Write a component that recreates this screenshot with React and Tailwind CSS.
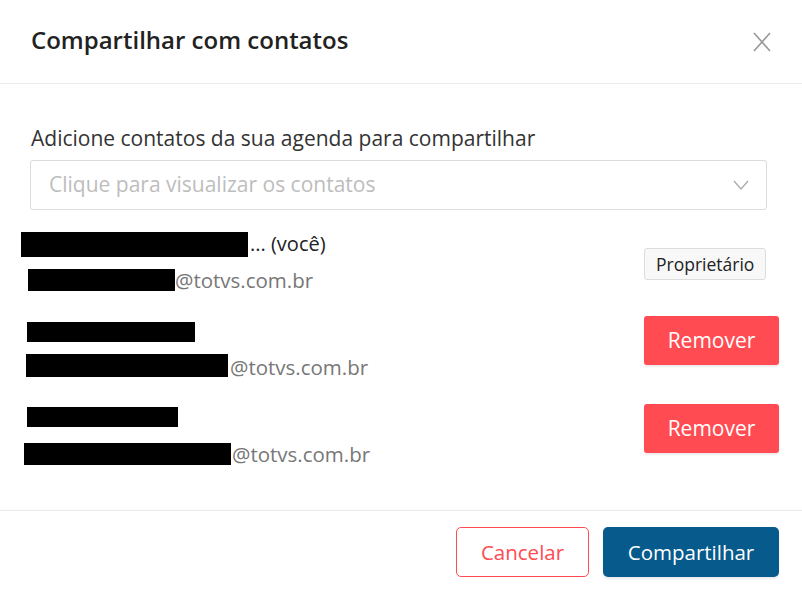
import React from 'react';

const font = { fontFamily: '"Open Sans", "Noto Sans", sans-serif' };

function Redacted({ className }) {
  return <div className={`bg-black shrink-0 ${className}`} />;
}

function RemoveButton() {
  return (
    <button className="w-[135px] h-[49px] rounded-[3px] bg-[#ff4b51] text-white text-[21px] shadow-[0_2px_2px_rgba(0,0,0,0.08)]">
      Remover
    </button>
  );
}

export default function App() {
  return (
    <div className="w-[802px] h-[592px] bg-white flex flex-col text-[#333]" style={font}>
      {/* Header */}
      <div className="h-[84px] shrink-0 flex items-center justify-between pl-[31px] pr-[30px] border-b border-[#ebebeb]">
        <h2 className="text-[24px] font-semibold text-[#222] pb-[4px]">Compartilhar com contatos</h2>
        <svg width="20" height="20" viewBox="0 0 20 20" className="text-[#999]">
          <path d="M2 1 L18 19 M18 1 L2 19" stroke="currentColor" strokeWidth="1.6" fill="none" />
        </svg>
      </div>

      {/* Body */}
      <div className="flex-1 pl-[30px] pr-[23px] pt-[42px]">
        <p className="text-[21px] leading-[24px] pl-[1px] text-[#333]">Adicione contatos da sua agenda para compartilhar</p>
        <div className="mt-[10px] mr-[12px] h-[50px] border border-[#dcdcdc] rounded-[3px] flex items-center justify-between pl-[18px] pr-[17px]">
          <span className="text-[21px] text-[#bdbdbd] pb-[1px]">Clique para visualizar os contatos</span>
          <svg width="16" height="10" viewBox="0 0 16 10" className="text-[#aaa]">
            <path d="M1 1 L8 9 L15 1" stroke="currentColor" strokeWidth="1.3" fill="none" />
          </svg>
        </div>

        {/* Row 1 */}
        <div className="mt-[20px] flex justify-between">
          <div className="flex flex-col">
            <div className="h-[28px] flex items-center ml-[-9px]">
              <Redacted className="w-[227px] h-[25px]" />
              <span className="text-[20px] text-[#222] ml-[2px]">... (você)</span>
            </div>
            <div className="mt-[10px] h-[24px] flex items-center ml-[-2px]">
              <Redacted className="w-[147px] h-[22px]" />
              <span className="text-[20.5px] text-[#777]">@totvs.com.br</span>
            </div>
          </div>
          <div className="w-[135px] pt-[18px]">
            <span className="inline-flex items-center h-[32px] px-[11px] bg-[#f8f8f8] border border-[#dcdcdc] rounded-[3px] text-[17.5px] text-[#222]">
              Proprietário
            </span>
          </div>
        </div>

        {/* Row 2 */}
        <div className="mt-[24px] flex justify-between">
          <div className="flex flex-col">
            <div className="pt-[6px] ml-[-3px]">
              <Redacted className="w-[168px] h-[20px]" />
            </div>
            <div className="mt-[12px] h-[23px] flex items-center ml-[-4px]">
              <Redacted className="w-[202px] h-[23px]" />
              <span className="text-[20.5px] text-[#777] ml-[2px] pt-[4px]">@totvs.com.br</span>
            </div>
          </div>
          <RemoveButton />
        </div>

        {/* Row 3 */}
        <div className="mt-[27px] flex justify-between">
          <div className="flex flex-col">
            <div className="pt-[3px] ml-[-3px]">
              <Redacted className="w-[151px] h-[20px]" />
            </div>
            <div className="mt-[16px] h-[22px] flex items-center ml-[-6px]">
              <Redacted className="w-[207px] h-[22px]" />
              <span className="text-[20.5px] text-[#777] ml-[1px]">@totvs.com.br</span>
            </div>
          </div>
          <RemoveButton />
        </div>
      </div>

      {/* Footer */}
      <div className="h-[82px] shrink-0 border-t border-[#ebebeb] flex items-start justify-end gap-[14px] pr-[23px] pt-[16px]">
        <button className="w-[133px] h-[50px] rounded-[5px] border border-[#ff4b51] text-[#ff4b51] text-[20.5px] bg-white">
          Cancelar
        </button>
        <button className="w-[176px] h-[50px] rounded-[5px] bg-[#065a8c] text-white text-[20.5px] shadow-[0_2px_2px_rgba(0,0,0,0.08)]">
          Compartilhar
        </button>
      </div>
    </div>
  );
}
